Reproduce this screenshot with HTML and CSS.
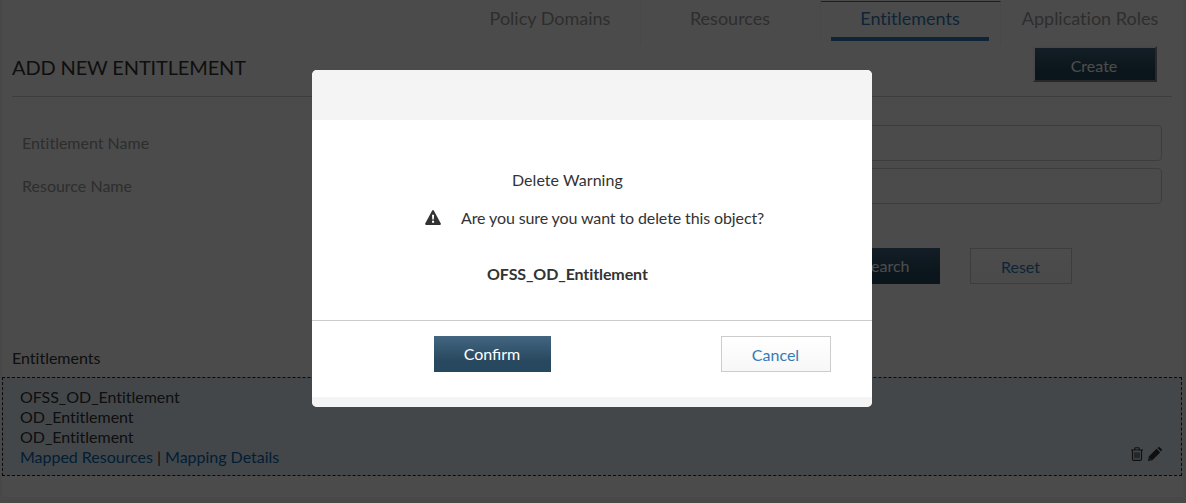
FILE: index.html
```html
<!DOCTYPE html>
<html lang="en">
<head>
<meta charset="utf-8">
<title>Entitlements</title>
<link rel="stylesheet" href="styles.css">
</head>
<body>
<main class="panel">
  <nav class="tabs">
    <a class="tab">Policy Domains</a>
    <a class="tab">Resources</a>
    <a class="tab active">Entitlements</a>
    <a class="tab last">Application Roles</a>
  </nav>
  <header class="heading">
    <h1>ADD NEW ENTITLEMENT</h1>
    <button class="btn primary create">Create</button>
  </header>
  <form class="form">
    <label class="field"><span>Entitlement Name</span><input type="text"></label>
    <label class="field"><span>Resource Name</span><input type="text"></label>
    <div class="actions">
      <button type="button" class="btn primary search">Search</button>
      <button type="button" class="btn outline reset">Reset</button>
    </div>
  </form>
  <h2 class="list-title">Entitlements</h2>
  <section class="row">
    <div class="row-text">
      <div>OFSS_OD_Entitlement</div>
      <div>OD_Entitlement</div>
      <div>OD_Entitlement</div>
      <div><a class="link">Mapped Resources</a> | <a class="link">Mapping Details</a></div>
    </div>
    <div class="row-icons">
      <svg class="trash" viewBox="0 0 12 14" fill="none" stroke="currentColor"><path d="M0 3H12M3.8 3V1.6Q3.8.7 4.7.7H7.3Q8.2.7 8.2 1.6V3M1.5 3V12.2Q1.5 13.3 2.5 13.3H9.5Q10.5 13.3 10.5 12.2V3M4 5.2V11.2M6 5.2V11.2M8 5.2V11.2" stroke-width="1.15"/></svg>
      <svg class="pencil" viewBox="0 0 14 14" fill="currentColor"><path d="M8.6 1.8 12.2 5.4 4.2 13.2 0 14 .8 9.6ZM9.4 1 10.3.3Q11.2-.3 11.9.4L13.6 2.1Q14.3 2.8 13.7 3.6L13 4.6Z"/><path d="M1.3 11.4 2.6 12.7" stroke="#d3e0e9" stroke-width=".8"/></svg>
    </div>
  </section>
</main>
<div class="overlay">
  <div class="dialog" role="dialog">
    <div class="dialog-head"></div>
    <div class="dialog-body">
      <p class="title">Delete Warning</p>
      <p class="question">
        <svg class="warn" viewBox="0 0 16 15"><path d="M7.2.5Q8 -.4 8.8.5L15.8 13.5Q16.2 14.8 15 15H1Q-.2 14.8.2 13.5Z" fill="#333"/><path d="M7 4.8H9.1L8.8 9.6H7.3ZM7 10.7H9.1V12.7H7Z" fill="#fff"/></svg>
        <span>Are you sure you want to delete this object?</span>
      </p>
      <p class="object">OFSS_OD_Entitlement</p>
    </div>
    <div class="dialog-actions">
      <button class="btn primary confirm">Confirm</button>
      <button class="btn outline cancel">Cancel</button>
    </div>
    <div class="dialog-foot"></div>
  </div>
</div>
</body>
</html>
```
FILE: styles.css
```css
* { box-sizing: border-box; }
html { height: 100%; overflow: hidden; }
body {
  margin: 0;
  height: 100%;
  overflow: hidden;
  background: #f0f0f0;
  color: #333;
  font: 16px/20px Lato, sans-serif;
  font-variant-ligatures: none;
}
h1, h2, p { margin: 0; font-weight: 400; }
.panel {
  width: 1181px;
  height: 497px;
  margin-left: 2px;
  background: #fcfcfc;
}
.tabs { display: flex; justify-content: flex-end; height: 45px; padding: 1px 2px 0 0; }
.tab {
  width: 180px;
  border-right: 1px solid #f0f0f0;
  padding: 5px 1px 0 0;
  text-align: center;
  font-size: 18px;
  line-height: 24px;
  color: #999;
}
.tab.last { border: 0; padding-right: 2px; }
.tab.active { color: #337ab7; border-top: 1px solid #337ab7; padding: 4px 11px 0 10px; }
.tab.active::after { content: ""; display: block; height: 4px; margin-top: 7px; background: #337ab7; }
.heading {
  display: flex;
  justify-content: space-between;
  height: 52px;
  margin: 0 11px 0 10px;
  padding: 1px 15px 0 0;
  border-bottom: 1px solid #ccc;
}
.heading h1 { padding-top: 9px; font-size: 20px; line-height: 24px; letter-spacing: -.14px; }
.btn {
  margin: 0;
  padding: 0;
  height: 36px;
  border: 0;
  font: 16px/20px Lato, sans-serif;
}
.primary { color: #fff; background: linear-gradient(#436580, #28485f 70%, #254860); }
.outline { color: #337ab7; border: 1px solid #ccc; background: linear-gradient(#fff, #f7f7f7); padding: 2px 1px 0 0; }
.create { width: 124px; border: 2px solid; border-color: #f2f2f2 #888 #888 #f2f2f2; padding: 3px 2px 0 0; }
.form { padding: 28px 21px 0 20px; }
.field { display: flex; justify-content: space-between; height: 36px; margin-bottom: 7px; color: #999; }
.field span { padding-top: 8px; }
.field input { width: 700px; height: 36px; border: 1px solid #ccc; border-radius: 4px; background: #fcfcfc; }
.actions { display: flex; justify-content: flex-end; gap: 30px; padding: 37px 90px 0 0; }
.search { width: 108px; }
.reset { width: 102px; }
.list-title { padding: 64px 0 0 10px; font-size: 16px; line-height: 20px; }
.row {
  display: flex;
  justify-content: space-between;
  width: 1180px;
  height: 99px;
  margin-top: 9px;
  border: 1px dashed #222;
  background: #e0edf5;
  padding: 9px 19px 0 17px;
}
.row-text { letter-spacing: -.02px; }
.link { color: #0567b3; }
.row-icons { display: flex; align-items: flex-start; gap: 5px; padding-top: 60px; }
.trash { width: 12px; height: 14px; }
.pencil { width: 14px; height: 14px; }
.overlay { position: absolute; inset: 0; background: rgba(0, 0, 0, .7); }
.dialog {
  width: 560px;
  height: 337px;
  margin: 70px 0 0 312px;
  overflow: hidden;
  border-radius: 5px;
  background: #fff;
}
.dialog-head { height: 50px; background: #f4f4f4; }
.dialog-body { height: 201px; border-bottom: 1px solid #ccc; padding-top: 50px; }
.title { padding-left: 200px; letter-spacing: .05px; }
.question { display: flex; padding: 18px 0 0 113px; }
.question span { padding-left: 20px; letter-spacing: -.11px; }
.warn { width: 16px; height: 15px; margin-top: 2px; }
.object { padding: 36px 0 0 175px; font-weight: 700; letter-spacing: -.1px; }
.dialog-actions { display: flex; justify-content: space-between; height: 76px; padding: 15px 41px 0 122px; }
.confirm { width: 117px; padding-right: 1px; }
.cancel { width: 110px; }
.dialog-foot { height: 10px; background: #f4f4f4; }
```
